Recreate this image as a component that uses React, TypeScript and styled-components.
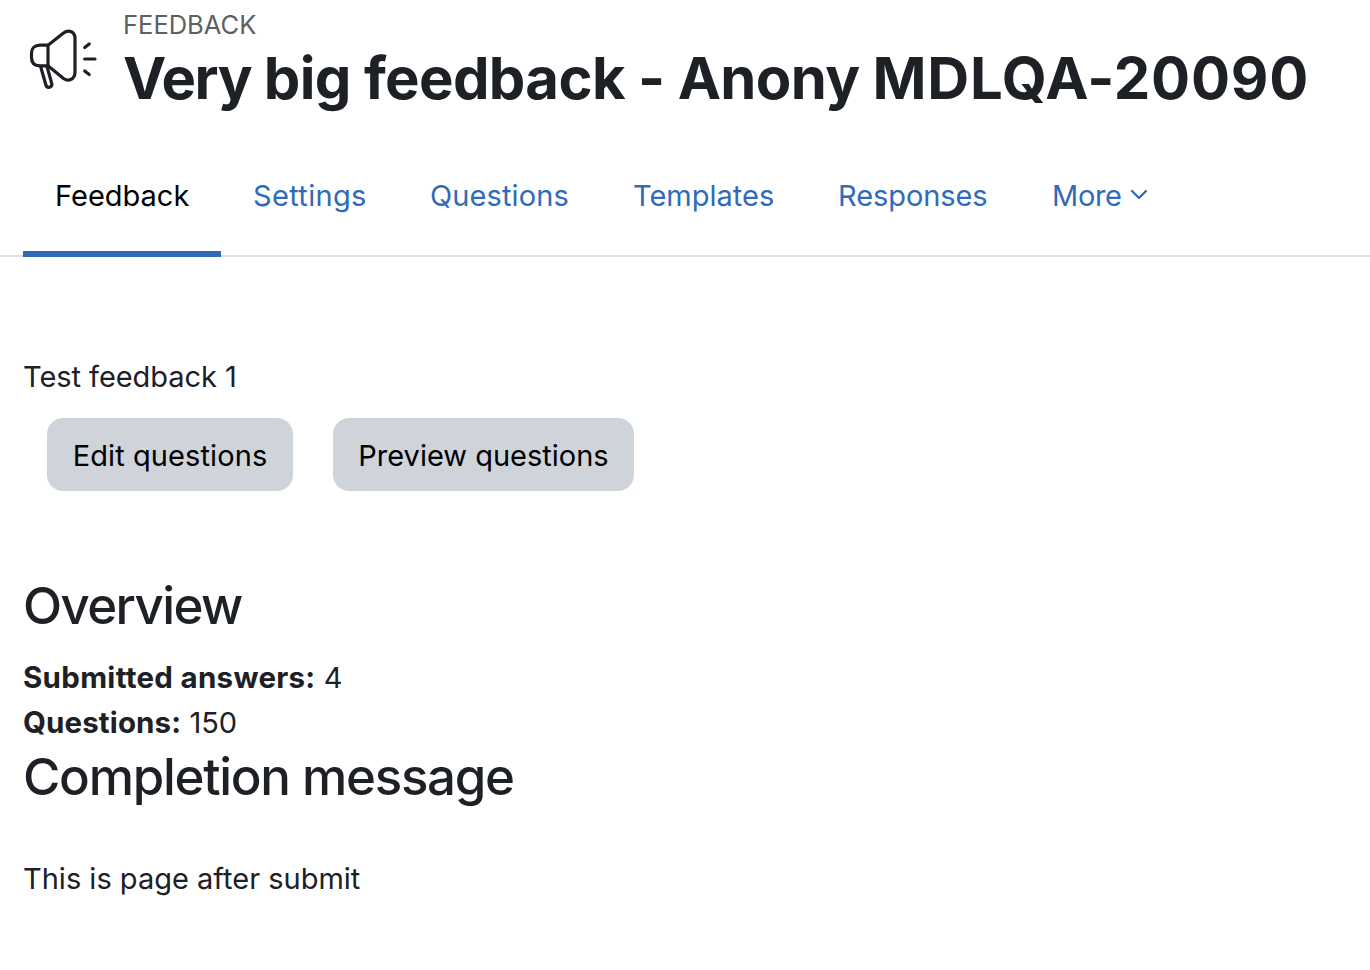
import styled, { createGlobalStyle } from "styled-components";

type Tab = {
  label: string;
  width: number;
  tracking?: number;
  active?: boolean;
  more?: boolean;
};

const tabs: Tab[] = [
  { label: "Feedback", width: 198, active: true },
  { label: "Settings", width: 177, tracking: 0.34 },
  { label: "Questions", width: 203, tracking: 0.12 },
  { label: "Templates", width: 205 },
  { label: "Responses", width: 214, tracking: -0.08 },
  { label: "More", width: 160, tracking: -0.3, more: true },
];

const summary = [
  { label: "Submitted answers:", value: "4", tracking: 0.29 },
  { label: "Questions:", value: "150", tracking: 0.12 },
];

function MegaphoneIcon() {
  return (
    <Megaphone viewBox="0 0 72 64" aria-hidden="true">
      <path d="M21 17.2H13C7.5 17.2 4.500 20.200 4.500 25v4.500C4.500 35 7.500 37.800 13 37.800H21Z" />
      <path d="M21 17.200L36.500 5C42 1 48 4 48 10.500V44C48 51 42 54.200 36.500 50.500L21 37.800" />
      <path d="M13.800 39L18.800 56.800C20 61 25.800 59.500 24.700 55.200L20 38.500" />
      <path d="M57.700 19.500L62.200 16M57.700 31H68M57.700 43L62.200 46.500" />
    </Megaphone>
  );
}

function App() {
  return (
    <>
      <GlobalStyle />
      <Page>
        <Header>
          <MegaphoneIcon />
          <div>
            <ActivityType>FEEDBACK</ActivityType>
            <Title>
              <TitlePart $tracking={-1.35}>Very </TitlePart>
              <TitlePart $tracking={-0.63}>big feedback - Anony </TitlePart>
              <TitlePart $tracking={0.72}>MDLQA-20090</TitlePart>
            </Title>
          </div>
        </Header>

        <Nav>
          {tabs.map(({ label, width, tracking, active, more }) => (
            <NavLink key={label} $width={width} $tracking={tracking} $active={active}>
              {label}
              {more && (
                <Chevron viewBox="0 0 18 12" aria-hidden="true">
                  <path d="M2 2l7 7 7-7" />
                </Chevron>
              )}
            </NavLink>
          ))}
        </Nav>

        <Content>
          <Text $tracking={-0.05}>Test feedback 1</Text>
          <Actions>
            <Button $width={246} $tracking={0.1}>
              Edit questions
            </Button>
            <Button $width={301}>Preview questions</Button>
          </Actions>

          <Overview>
            <Heading $tracking={-1.6}>Overview</Heading>
            <Summary>
              {summary.map(({ label, value, tracking }) => (
                <Text key={label}>
                  <Label $tracking={tracking}>{label}</Label> {value}
                </Text>
              ))}
            </Summary>
          </Overview>

          <Heading $tracking={-1.28}>Completion message</Heading>
          <Message>This is page after submit</Message>
        </Content>
      </Page>
    </>
  );
}

export default App;

const GlobalStyle = createGlobalStyle`
  * {
    box-sizing: border-box;
  }

  body {
    margin: 0;
    background: #fff;
    color: #1d2125;
    font-family: Inter, "Liberation Sans", sans-serif;
    font-size: 29px;
    line-height: 45px;
    overflow: hidden;
  }
`;

const Page = styled.main`
  width: 100%;
  min-height: 970px;
`;

const Header = styled.header`
  display: flex;
  height: 136px;
  padding: 4px 0 0 27px;
`;

const Megaphone = styled.svg`
  flex: none;
  width: 72px;
  height: 64px;
  margin: 24px 24px 0 0;
  fill: none;
  stroke: #1d2125;
  stroke-width: 3.2;
  stroke-linecap: round;
  stroke-linejoin: round;
`;

const ActivityType = styled.div`
  color: #5b6065;
  font-size: 25.5px;
  line-height: 42px;
`;

const Title = styled.h1`
  margin: -4px 0 0;
  font-size: 58px;
  font-weight: 700;
  line-height: 72px;
  white-space: nowrap;
`;

const TitlePart = styled.span<{ $tracking: number }>`
  letter-spacing: ${({ $tracking }) => $tracking}px;
`;

const Nav = styled.nav`
  display: flex;
  height: 121px;
  padding-left: 23px;
  border-bottom: 2px solid #dee2e6;
`;

const NavLink = styled.a<{ $width: number; $tracking?: number; $active?: boolean }>`
  flex: none;
  display: flex;
  width: ${({ $width }) => $width}px;
  height: 121px;
  padding: 37px 0 0 32px;
  border-bottom: 6px solid ${({ $active }) => ($active ? "#2f6bb8" : "transparent")};
  color: ${({ $active }) => ($active ? "#000" : "#2f6bb8")};
  letter-spacing: ${({ $tracking = 0 }) => $tracking}px;
  white-space: nowrap;
`;

const Chevron = styled.svg`
  width: 18px;
  height: 12px;
  margin: 16px 0 0 8px;
  fill: none;
  stroke: currentColor;
  stroke-width: 2.3;
  stroke-linecap: round;
  stroke-linejoin: round;
`;

const Content = styled.section`
  padding: 97px 23px 0;
`;

const Text = styled.div<{ $tracking?: number }>`
  letter-spacing: ${({ $tracking = 0 }) => $tracking}px;
  white-space: nowrap;
`;

const Label = styled.b<{ $tracking: number }>`
  font-size: 29.5px;
  font-weight: 700;
  letter-spacing: ${({ $tracking }) => $tracking}px;
`;

const Actions = styled.div`
  display: flex;
  gap: 40px;
  margin-top: 19px;
  padding-left: 24px;
`;

const Button = styled.button<{ $width: number; $tracking?: number }>`
  width: ${({ $width }) => $width}px;
  height: 73px;
  padding: 2px 0 0;
  border: 0;
  border-radius: 16px;
  background: #ced4da;
  color: #000;
  font: inherit;
  letter-spacing: ${({ $tracking = 0 }) => $tracking}px;
  white-space: nowrap;
`;

const Overview = styled.section`
  margin-top: 83px;
`;

const Heading = styled.h2<{ $tracking: number }>`
  margin: 0;
  font-size: 51px;
  font-weight: 500;
  line-height: 64px;
  letter-spacing: ${({ $tracking }) => $tracking}px;
`;

const Summary = styled.div`
  padding-top: 17px;
`;

const Message = styled.p`
  margin: 47px 0 0;
`;
